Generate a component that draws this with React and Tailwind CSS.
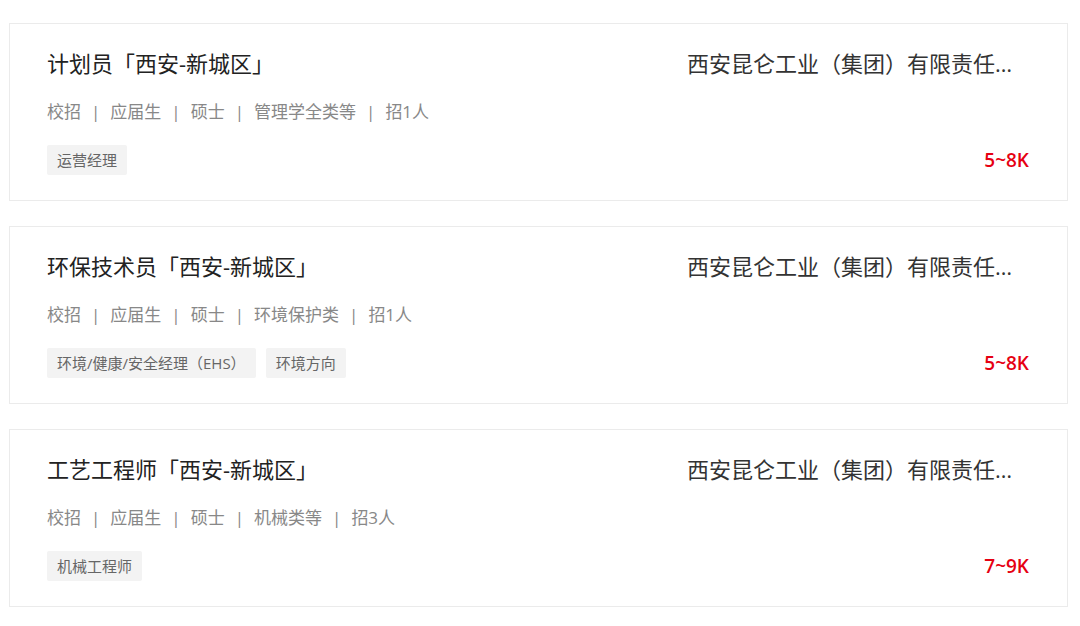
const jobs = [
  {
    title: '计划员「西安-新城区」',
    meta: ['校招', '应届生', '硕士', '管理学全类等', '招1人'],
    tags: ['运营经理'],
    company: '西安昆仑工业（集团）有限责任公司',
    salary: '5~8K',
  },
  {
    title: '环保技术员「西安-新城区」',
    meta: ['校招', '应届生', '硕士', '环境保护类', '招1人'],
    tags: ['环境/健康/安全经理（EHS）', '环境方向'],
    company: '西安昆仑工业（集团）有限责任公司',
    salary: '5~8K',
  },
  {
    title: '工艺工程师「西安-新城区」',
    meta: ['校招', '应届生', '硕士', '机械类等', '招3人'],
    tags: ['机械工程师'],
    company: '西安昆仑工业（集团）有限责任公司',
    salary: '7~9K',
  },
]

function JobCard({ job }) {
  return (
    <div className="flex justify-between border border-[#ebebeb] bg-white pl-[37px] pr-[38px] pt-[24px] pb-[25px]">
      <div className="flex flex-col">
        <div className="h-[30px] text-[22px] leading-[30px] text-[#222]">{job.title}</div>
        <div className="mt-[22px] flex items-center text-[17px] leading-[24px] text-[#888]">
          {job.meta.map((m, i) => (
            <span key={i} className="flex items-center">
              {i > 0 && <span className="mx-[10px] text-[#888]">|</span>}
              {m}
            </span>
          ))}
        </div>
        <div className="mt-[21px] flex gap-[10px]">
          {job.tags.map((t) => (
            <span
              key={t}
              className="h-[30px] rounded-[2px] bg-[#f3f3f3] px-[10px] text-[15px] leading-[30px] text-[#666]"
            >
              {t}
            </span>
          ))}
        </div>
      </div>
      <div className="flex w-[342px] flex-col justify-between">
        <div className="h-[30px] truncate text-[22px] leading-[30px] text-[#333]">
          {job.company}
        </div>
        <div className="h-[30px] text-right text-[19px] font-semibold leading-[30px] text-[#e60012]">
          {job.salary}
        </div>
      </div>
    </div>
  )
}

export default function App() {
  return (
    <div
      className="min-h-[626px] bg-white pt-[23px]"
      style={{ fontFamily: '"Open Sans", "Noto Sans CJK SC", sans-serif' }}
    >
      <div className="ml-[9px] flex w-[1059px] flex-col gap-[25px]">
        {jobs.map((job, i) => (
          <JobCard key={i} job={job} />
        ))}
      </div>
    </div>
  )
}
